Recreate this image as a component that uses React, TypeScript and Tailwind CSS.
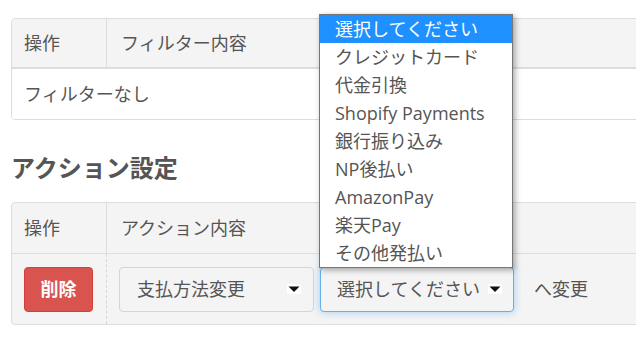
import React from "react";

const font = { fontFamily: '"Open Sans", "Noto Sans CJK JP", sans-serif' };

function Arrow() {
  return (
    <svg width="14" height="10" viewBox="0 0 14 10" className="shrink-0">
      <rect x="0" y="0" width="14" height="10" fill="#ffffff" />
      <path d="M1.5 2.5 L12.5 2.5 L7 8 Z" fill="#111111" />
    </svg>
  );
}

const options = [
  "選択してください",
  "クレジットカード",
  "代金引換",
  "Shopify Payments",
  "銀行振り込み",
  "NP後払い",
  "AmazonPay",
  "楽天Pay",
  "その他発払い",
];

export default function App() {
  return (
    <div
      className="relative w-[636px] h-[340px] overflow-hidden bg-white text-[#555555]"
      style={font}
    >
      <div className="pl-[11px] pt-[18px]">
        {/* Filter table */}
        <div className="w-[700px] rounded-[4px] border border-[#dddddd] overflow-hidden">
          <div className="flex h-[50px] bg-[#f4f4f4] border-b-2 border-[#dddddd] text-[18px]">
            <div className="w-[95px] flex items-center pl-[12px] border-r border-[#dddddd]">
              操作
            </div>
            <div className="flex items-center pl-[14px]">フィルター内容</div>
          </div>
          <div className="flex h-[50px] items-center pl-[12px] text-[18px] bg-white">
            フィルターなし
          </div>
        </div>

        {/* Heading */}
        <div className="mt-[32px] h-[32px] flex items-center text-[24px] font-semibold text-[#555555]">
          アクション設定
        </div>

        {/* Action table */}
        <div className="mt-[18px] w-[700px] rounded-[4px] border border-[#dddddd] overflow-hidden bg-[#f4f4f4]">
          <div className="flex h-[51px] border-b border-[#dddddd] text-[18px]">
            <div className="w-[95px] flex items-center pl-[12px] border-r border-[#dddddd]">
              操作
            </div>
            <div className="flex items-center pl-[14px]">アクション内容</div>
          </div>
          <div className="flex h-[70px] text-[18px]">
            <div className="w-[95px] flex items-center pl-[12px] border-r border-dashed border-[#d6d6d6]">
              <button className="w-[69px] h-[45px] rounded-[4px] bg-[#d9534f] border border-[#d43f3a] text-white font-semibold text-[18px] flex items-center justify-center">
                削除
              </button>
            </div>
            <div className="flex items-center pl-[12px]">
              <div className="w-[195px] h-[45px] rounded-[4px] border border-[#d4d4d4] bg-[#f4f4f4] flex items-center justify-between pl-[17px] pr-[12px]">
                <span>支払方法変更</span>
                <Arrow />
              </div>
              <div className="ml-[6px] w-[194px] h-[45px] rounded-[4px] border border-[#66afe9] bg-[#f4f4f4] shadow-[0_0_8px_rgba(102,175,233,0.6)] flex items-center justify-between pl-[16px] pr-[11px]">
                <span>選択してください</span>
                <Arrow />
              </div>
              <div className="ml-[20px]">へ変更</div>
            </div>
          </div>
        </div>
      </div>

      {/* Open dropdown */}
      <div className="absolute left-[319px] top-[14px] w-[194px] border border-[#767676] bg-white shadow-[2px_2px_6px_rgba(0,0,0,0.35)]">
        {options.map((o, i) => (
          <div
            key={o}
            className={
              i === 0
                ? "h-[28px] flex items-center pl-[15px] text-[18px] bg-[#1e90ff] text-white"
                : "h-[28px] flex items-center pl-[15px] text-[18px] text-[#555555]"
            }
          >
            {o}
          </div>
        ))}
      </div>
    </div>
  );
}
